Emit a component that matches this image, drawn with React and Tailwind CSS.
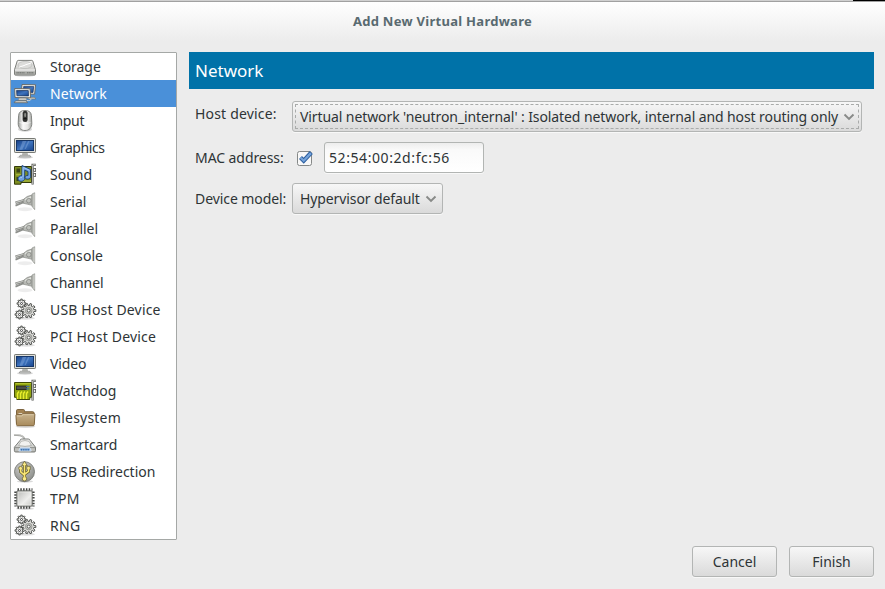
import React from "react";

const Defs = () => (
  <svg className="absolute h-0 w-0" aria-hidden="true">
    <defs>
      <linearGradient id="screen" x1="0" y1="0" x2="1" y2="1">
        <stop offset="0" stopColor="#163f86" /><stop offset=".5" stopColor="#3f74bd" /><stop offset="1" stopColor="#17458f" />
      </linearGradient>
      <linearGradient id="metal" x1="0" y1="0" x2="0" y2="1">
        <stop offset="0" stopColor="#f6f6f5" /><stop offset="1" stopColor="#b4b5b1" />
      </linearGradient>
      <linearGradient id="shell" x1="0" y1="0" x2="1" y2="0">
        <stop offset="0" stopColor="#9b9d99" /><stop offset=".35" stopColor="#fafafa" /><stop offset=".7" stopColor="#e6e6e4" /><stop offset="1" stopColor="#a4a6a2" />
      </linearGradient>
      <linearGradient id="folder" x1="0" y1="0" x2="0" y2="1">
        <stop offset="0" stopColor="#c9b48f" /><stop offset="1" stopColor="#a88b5c" />
      </linearGradient>
      <radialGradient id="disc" cx=".4" cy=".3" r=".8">
        <stop offset="0" stopColor="#cfcfcd" /><stop offset="1" stopColor="#858783" />
      </radialGradient>
      <linearGradient id="chip" x1="0" y1="0" x2="1" y2="1">
        <stop offset="0" stopColor="#b9bab7" /><stop offset=".6" stopColor="#eeeeec" /><stop offset="1" stopColor="#c7c8c5" />
      </linearGradient>
    </defs>
  </svg>
);

const Icon = ({ children }) => (
  <svg className="h-6 w-6 shrink-0" viewBox="0 0 24 24" fill="none">{children}</svg>
);

const Storage = () => (
  <Icon>
    <ellipse cx="12" cy="20.3" rx="10.5" ry="1.3" fill="#000" opacity=".18" />
    <path d="M5.2 5.4h13.6q.8 0 1 .7l2.7 8.6v4.3q0 1-1 1h-19q-1 0-1-1v-4.3l2.7-8.6q.2-.7 1-.7z" fill="url(#metal)" stroke="#7c7e7a" strokeWidth="1" />
    <ellipse cx="12" cy="10" rx="7" ry="3.6" fill="#dcdcda" stroke="#b9bab7" strokeWidth=".7" />
    <path d="M12 10l6-2M6 12.2l6-2" stroke="#fff" strokeWidth="1" />
    <path d="M2 15h20" stroke="#fff" strokeWidth=".8" />
    <path d="M2.300 18h19.400" stroke="#a5a7a3" strokeWidth="2.400" />
    <path d="M3.500 17.800h8M14 17.800h6.500" stroke="#6c6e6a" strokeWidth="1" strokeDasharray="1.2 .5" />
  </Icon>
);

const Network = () => (
  <Icon>
    <path d="M14 15.300h7.500l1.300 1.700h-7.500z" fill="#d8d8d4" stroke="#70726e" strokeWidth=".7" />
    <path d="M9 2.500l13.600.3-1 9.400-13.400-.5z" fill="#eeeee8" stroke="#5f5b50" strokeWidth=".8" />
    <path d="M10.700 4.400l10.100.2-.8 5.900-9.900-.3z" fill="url(#screen)" stroke="#122c57" strokeWidth=".6" />
    <path d="M15 12.500h3v2h-3z" fill="#aaa" />
    <path d="M1.700 6.500l15.400.3.500 9-15.500-.3z" fill="#f0f0ea" stroke="#5f5b50" strokeWidth=".8" />
    <path d="M3.600 8.400l11.700.2.200 5.300-11.600-.2z" fill="url(#screen)" stroke="#122c57" strokeWidth=".7" />
    <path d="M6 16h7l1.200 2.500H5z" fill="#c9cac6" stroke="#777" strokeWidth=".5" />
    <path d="M2.500 18.900h10.800l1.200 1.800H1.200z" fill="#eeeee8" stroke="#62625b" strokeWidth=".8" />
    <path d="M14 18.600c4 .3 5-1.600 2.500-2.300" stroke="#d6d6d0" strokeWidth="1" />
  </Icon>
);

const Mouse = () => (
  <Icon>
    <ellipse cx="12" cy="20.200" rx="7" ry="2.500" fill="#000" opacity=".17" />
    <path d="M12 1.500c3.900 0 6.100 1.500 6.400 5.100l.4 7.200c.2 5-2.500 7.700-6.800 7.700s-7-2.700-6.800-7.700l.4-7.200C5.900 3 8.100 1.500 12 1.500z" fill="url(#shell)" stroke="#7b7d79" strokeWidth=".9" />
    <rect x="9.600" y="1.700" width="5" height="11.300" rx="2.500" fill="#323432" />
    <rect x="11.200" y="4" width="1.900" height="4" rx=".9" fill="#888a86" />
    <path d="M10.500 9.700h3.200" stroke="#111" />
    <path d="M6.500 13.500q5.500 3 11 0" stroke="#fff" strokeWidth=".8" opacity=".7" />
  </Icon>
);

const Monitor = () => (
  <Icon>
    <ellipse cx="12" cy="21.300" rx="8" ry="1.400" fill="#000" opacity=".17" />
    <path d="M9.500 16.500h5l.6 3h-6.200z" fill="#b5b7b2" />
    <path d="M7.200 19.300h9.600l.8 1.500H6.400z" fill="#fff" stroke="#858783" strokeWidth=".8" />
    <rect x="1.500" y="2.500" width="21" height="14" rx=".7" fill="#dedfda" stroke="#777974" />
    <rect x="3.500" y="4.500" width="17" height="10" fill="url(#screen)" stroke="#173768" />
    <path d="M9.600 5l-3 8.800h2.700l4-8.800zM15 5l-3.500 8h1.400L16.600 5z" fill="#85a9dc" opacity=".45" />
  </Icon>
);

const Bracket = () => (
  <>
    <path d="M22.800 1.800h-3.200v19.700" stroke="#555753" strokeWidth="2.200" />
    <path d="M22.500 1.800h-2.800v19.200" stroke="#e4e4df" strokeWidth=".8" />
    <rect x="20.700" y="5.500" width="1.900" height="3" fill="#fff" stroke="#555753" strokeWidth=".8" />
    <rect x="20.700" y="10.500" width="1.900" height="3" fill="#fff" stroke="#555753" strokeWidth=".8" />
  </>
);

const Sound = () => (
  <Icon>
    <path d="M1.500 3.500h17v16H8v1.700H1.500z" fill="#7e8e21" stroke="#333b09" strokeWidth="1" />
    <path d="M3.500 5.500h3.500v4H3.500zM3.500 14h2.500v4H3.500z" fill="#3b4417" />
    <path d="M3 11.800h5M10 18h8" stroke="#b5c548" />
    <Bracket />
    <path d="M9 12.600V2.500l8.600 4v7.300c0 1.500-1.500 2.300-3 2.300s-2.600-.7-2.600-1.700c0-1.300 1.200-2 3-1.900V8.600l-3.300-1.400v8.300c0 1.600-1.600 2.800-3.500 2.800-1.800 0-3.200-.9-3.200-2.600 0-2 2-3.200 4-3.100z" fill="#6fa0de" stroke="#173f79" strokeWidth=".9" />
    <path d="M10 4.300v9.400M10.500 4.500l6 2.800M6.500 15.500q1-1.300 2.500-1.200" stroke="#b5d6fa" strokeWidth=".8" />
  </Icon>
);

const Plug = () => (
  <Icon>
    <ellipse cx="12" cy="19.200" rx="7.500" ry="2" fill="#000" opacity=".07" />
    <path d="M2.500 15.600L12 11.700" stroke="#8d8f8b" strokeWidth="1.800" />
    <path d="M2.500 12.800L13 9.800" stroke="#888a86" strokeWidth="2.700" />
    <path d="M2.800 12.500L13 9.500" stroke="#ccceca" strokeWidth="1" />
    <path d="M10 9.800l4.200-3.300 4.800-1.500v10.300l-4.900-1.200-3.700-.8z" fill="#b5b7b2" stroke="#858783" strokeWidth=".7" />
    <path d="M12.200 9.700L18 7" stroke="#e2e4df" strokeWidth="1.600" />
    <circle cx="15.800" cy="10.700" r="2.300" fill="#bfc1bc" stroke="#858783" strokeWidth=".8" />
    <path d="M19 4l2.700-1.300v17L19 16.300z" fill="#b5b7b2" stroke="#979994" strokeWidth=".7" />
    <path d="M21 4v14" stroke="#d7d9d4" strokeWidth=".8" />
  </Icon>
);

// Outline of a cog with n square teeth between an inner and an outer radius.
const cogPath = (x, y, inner, outer, n) => {
  const points = [];
  for (let i = 0; i < n; i++) {
    const a = (i / n) * Math.PI * 2;
    const s = Math.PI / n;
    [[inner, -0.6], [outer, -0.42], [outer, 0.42], [inner, 0.6]].forEach(([r, t]) => {
      points.push((x + r * Math.cos(a + s * t)).toFixed(2) + " " + (y + r * Math.sin(a + s * t)).toFixed(2));
    });
  }
  return "M" + points.join("L") + "Z";
};

const Gears = () => (
  <Icon>
    <ellipse cx="13" cy="20.300" rx="9" ry="1.500" fill="#000" opacity=".12" />
    <path d={cogPath(8.5, 5.5, 2.9, 4.5, 8)} fill="#f0f0ee" stroke="#454744" strokeWidth=".9" />
    <circle cx="8.500" cy="5.500" r="1" fill="#fff" stroke="#333" strokeWidth=".9" />
    <path d={cogPath(6.5, 16.5, 2.9, 4.5, 8)} fill="#f0f0ee" stroke="#454744" strokeWidth=".9" />
    <circle cx="6.500" cy="16.500" r="1" fill="#fff" stroke="#333" strokeWidth=".9" />
    <path d={cogPath(15.7, 12.6, 5.2, 7.2, 10)} fill="#dededb" stroke="#454744" strokeWidth=".9" />
    <circle cx="15.700" cy="12.600" r="3.300" fill="#c9cac7" stroke="#92948f" strokeWidth=".9" />
    <circle cx="15.700" cy="12.600" r="1.500" fill="#fff" stroke="#4e504d" strokeWidth=".9" />
  </Icon>
);

const Card = () => (
  <Icon>
    <path d="M1.500 3.500h17v14.800h-1.700v2.200h-13v-2.200H1.500z" fill="#91a510" stroke="#414b06" strokeWidth="1" />
    <path d="M2.600 4.600H18" stroke="#c4d43e" strokeWidth=".7" />
    <rect x="3.500" y="7" width="10" height="3.600" fill="#4a4e48" stroke="#1e2119" strokeWidth=".8" />
    <path d="M13 7.500h3.500M13 9.800h3.500" stroke="#416c9c" strokeWidth="1.300" />
    <path d="M4.500 20v-5.500l1.500-2M7.500 20v-5.500l1.500-2M10.500 20v-5.500l1.500-2M13.500 20v-5.500l1.500-2" stroke="#e9ee2c" strokeWidth="1.500" />
    <Bracket />
  </Icon>
);

const Folder = () => (
  <Icon>
    <ellipse cx="12.500" cy="20.600" rx="10" ry="1.300" fill="#000" opacity=".15" />
    <path d="M3.500 17.500V4.700q0-1.200 1.200-1.200h5.600q1.200 0 1.200 1.200v1h8.300q1.200 0 1.200 1.200v10z" fill="#a48454" stroke="#735a34" strokeWidth=".9" />
    <path d="M5.500 7.500h14" stroke="#fff" strokeWidth="1" opacity=".65" />
    <path d="M2.900 9.500q0-.9.900-.9h4.800l1.100-1.200h11q1.200 0 1.200 1.100l-.6 10.200q-.1 1-1 1H4.500q-.9 0-1-1z" fill="url(#folder)" stroke="#7d6239" strokeWidth=".9" />
    <path d="M4 10h5l1.100-1.300h10.500" stroke="#ddcdae" strokeWidth=".7" />
  </Icon>
);

const Smartcard = () => (
  <Icon>
    <path d="M1 2.200c4-.4 9.700-.5 10.500 4" stroke="#9b9d99" strokeWidth="1.700" />
    <path d="M1 1.900c4-.3 9.400-.4 10.300 3.700" stroke="#e2e2e0" strokeWidth=".7" />
    <path d="M7 7.500q.3-1.500 1.800-1.500h6.400q1.500 0 2 1.500l5.300 6.700v3.500q0 1.300-1.300 1.300H2.700q-1.300 0-1.300-1.300v-3.500z" fill="url(#metal)" stroke="#6c6e6a" strokeWidth=".9" />
    <path d="M8 8.300q4-1.500 8 0l2.400 4.200q-6.400 1.700-12.800 0z" fill="#f2f2f0" stroke="#9fa19c" strokeWidth=".7" />
    <path d="M2 14.700h5l1 1.200h8l1-1.200h5" stroke="#777975" strokeWidth=".8" />
    <path d="M7 14.800h10l1.200 3.200H5.800z" fill="#85acd8" stroke="#e3edfa" strokeWidth=".8" />
    <path d="M8 16.700h8" stroke="#376dab" strokeWidth="1.400" strokeDasharray="1 .8" />
  </Icon>
);

const Usb = () => (
  <Icon>
    <ellipse cx="12" cy="21.400" rx="8" ry="1.300" fill="#000" opacity=".15" />
    <circle cx="11.500" cy="11.700" r="10" fill="url(#disc)" stroke="#777975" strokeWidth=".9" />
    <g stroke="#5d5828" strokeWidth="3">
      <path d="M11.500 18V5M7.700 8.500v3.300l3.800 3.400M15.500 8v3.400l-4 3" />
    </g>
    <g fill="#f9e98a" stroke="#5d5828" strokeWidth=".7">
      <path d="M8.700 5.600l2.800-4.400 2.800 4.400z" />
      <circle cx="7.600" cy="8.300" r="1.900" />
      <path d="M13.800 6.300h3.400v3.400h-3.400z" />
      <circle cx="11.500" cy="18.800" r="2.200" />
    </g>
    <path d="M11.500 18V5M7.700 8.500v3.300l3.800 3.400M15.500 8v3.400l-4 3" stroke="#f9e675" strokeWidth="1.600" />
  </Icon>
);

const Chip = () => (
  <Icon>
    <ellipse cx="12" cy="21.700" rx="9" ry="1.300" fill="#000" opacity=".15" />
    <path d="M4.500 2.500h15M4.500 20.500h14" stroke="#454744" strokeWidth="2.400" strokeDasharray="1.500 1.300" />
    <path d="M2.500 4.500v15M20.400 4.500v15" stroke="#454744" strokeWidth="2.400" strokeDasharray="1.500 1.300" />
    <rect x="3.900" y="3.900" width="15.200" height="15.200" rx=".6" fill="url(#chip)" stroke="#555753" strokeWidth="1" />
    <rect x="5" y="5" width="13" height="13" stroke="#f4f4f2" strokeWidth=".6" />
  </Icon>
);

const devices = [
  ["Storage", Storage, "tracking-[-0.05px]"],
  ["Network", Network, "tracking-[0.08px]"],
  ["Input", Mouse, "tracking-[-0.3px]"],
  ["Graphics", Monitor, "tracking-[-0.4px]"],
  ["Sound", Sound, "tracking-[0px]"],
  ["Serial", Plug, "tracking-[0px]"],
  ["Parallel", Plug, "tracking-[-0.05px]"],
  ["Console", Plug, "tracking-[0.05px]"],
  ["Channel", Plug, "tracking-[-0.1px]"],
  ["USB Host Device", Gears, "tracking-[0.17px]"],
  ["PCI Host Device", Gears, "tracking-[0.2px]"],
  ["Video", Monitor, "tracking-[-0.1px]"],
  ["Watchdog", Card, "tracking-[-0.05px]"],
  ["Filesystem", Folder, "tracking-[0.2px]"],
  ["Smartcard", Smartcard, "tracking-[-0.1px]"],
  ["USB Redirection", Usb, "tracking-[0px]"],
  ["TPM", Chip, "tracking-[0.2px]"],
  ["RNG", Gears, "tracking-[0.3px]"],
];

const Chevron = () => (
  <svg className="h-3 w-3 shrink-0" viewBox="0 0 12 12" fill="none">
    <path d="M1.500 3.500L6 8l4.500-4.500" stroke="#888a88" strokeWidth="1.900" />
  </svg>
);

const button =
  "flex items-center rounded-[3px] border border-[#b3b5b4] bg-linear-to-b from-[#f7f7f7] to-[#dadada] shadow-[0_1px_0_#f8f8f8]";

export default function App() {
  return (
    <div className="flex h-[589px] w-[885px] flex-col overflow-hidden bg-[#ececec] font-['Noto_Sans','Open_Sans',sans-serif] text-[14px] leading-[20px] text-[#2e3436]">
      <Defs />
      <div className="flex h-px shrink-0 bg-[#d0d0d0]">
        <div className="ml-auto w-[32px] bg-black" />
      </div>
      <header className="flex h-[40px] shrink-0 items-center justify-center border-t border-[#a1a1a1] bg-linear-to-b from-white to-[#ececec] pb-[2px]">
        <h1 className="text-[13px] font-bold tracking-[0.28px] text-[#596a70]">Add New Virtual Hardware</h1>
      </header>

      <div className="mt-[11px] flex h-[488px] shrink-0 pl-[10px]">
        <ul className="w-[167px] rounded-[1px] border border-[#a5a8a6] bg-white">
          {devices.map(([name, Glyph, tracking]) => (
            <li
              key={name}
              className={
                "flex h-[27px] items-center pl-[2px] whitespace-nowrap " +
                (name === "Network" ? "bg-[#4a90d9] text-white" : "")
              }
            >
              <Glyph />
              <span className={"ml-[13px] " + tracking}>{name}</span>
            </li>
          ))}
        </ul>

        <main className="ml-[12px] w-[685px]">
          <div className="flex h-[37px] items-center bg-[#0072a8] pl-[6px] text-[17px] text-white">
            <h2>Network</h2>
          </div>
          <div className="mt-[12px] flex h-[31px] pl-[6px]">
            <label className="mt-[3px] w-[97px] tracking-[0.18px] whitespace-nowrap">Host device:</label>
            <button className={button + " w-[570px] p-[2px]"}>
              <span className="flex h-full w-full items-center justify-between border border-dashed border-[#a9abaa] pr-[3px] pl-[4px]">
                <span className="tracking-[-0.095px] whitespace-nowrap">
                  Virtual network 'neutron_internal' : Isolated network, internal and host routing only
                </span>
                <Chevron />
              </span>
            </button>
          </div>
          <div className="mt-[10px] flex h-[31px] items-center pl-[6px]">
            <label className="w-[102px] tracking-[-0.07px] whitespace-nowrap">MAC address:</label>
            <svg className="h-[18px] w-[17px]" viewBox="0 0 17 18" fill="none">
              <rect x=".5" y="2.500" width="14" height="14" rx="2" fill="#f8f8f8" stroke="#858887" />
              <path d="M3.500 8.500l3.200 3.200L14.300 3.500" stroke="#2b5e9f" strokeWidth="4.200" />
              <path d="M3.700 8.700l3 3 7.200-7.600" stroke="#75a3da" strokeWidth="2.300" />
            </svg>
            <div className="ml-[10px] flex h-[31px] w-[160px] items-center rounded-[3px] border border-[#b2b5b3] bg-linear-to-b from-[#ededed] via-[#fafafa] via-25% to-white pl-[4px] tracking-[0.58px] shadow-[0_1px_0_#f8f8f8]">
              52:54:00:2d:fc:56
            </div>
          </div>
          <div className="mt-[10px] flex h-[31px] items-center pl-[6px]">
            <label className="w-[97px] tracking-[-0.08px] whitespace-nowrap">Device model:</label>
            <button className={button + " h-[31px] w-[151px] justify-between pr-[5px] pl-[7px]"}>
              <span className="tracking-[-0.1px] whitespace-nowrap">Hypervisor default</span>
              <Chevron />
            </button>
          </div>
        </main>
      </div>

      <footer className="mt-[6px] flex justify-end gap-[12px] pr-[11px]">
        <button className={button + " h-[31px] w-[85px] justify-center"}>Cancel</button>
        <button className={button + " h-[31px] w-[85px] justify-center"}>Finish</button>
      </footer>
    </div>
  );
}
